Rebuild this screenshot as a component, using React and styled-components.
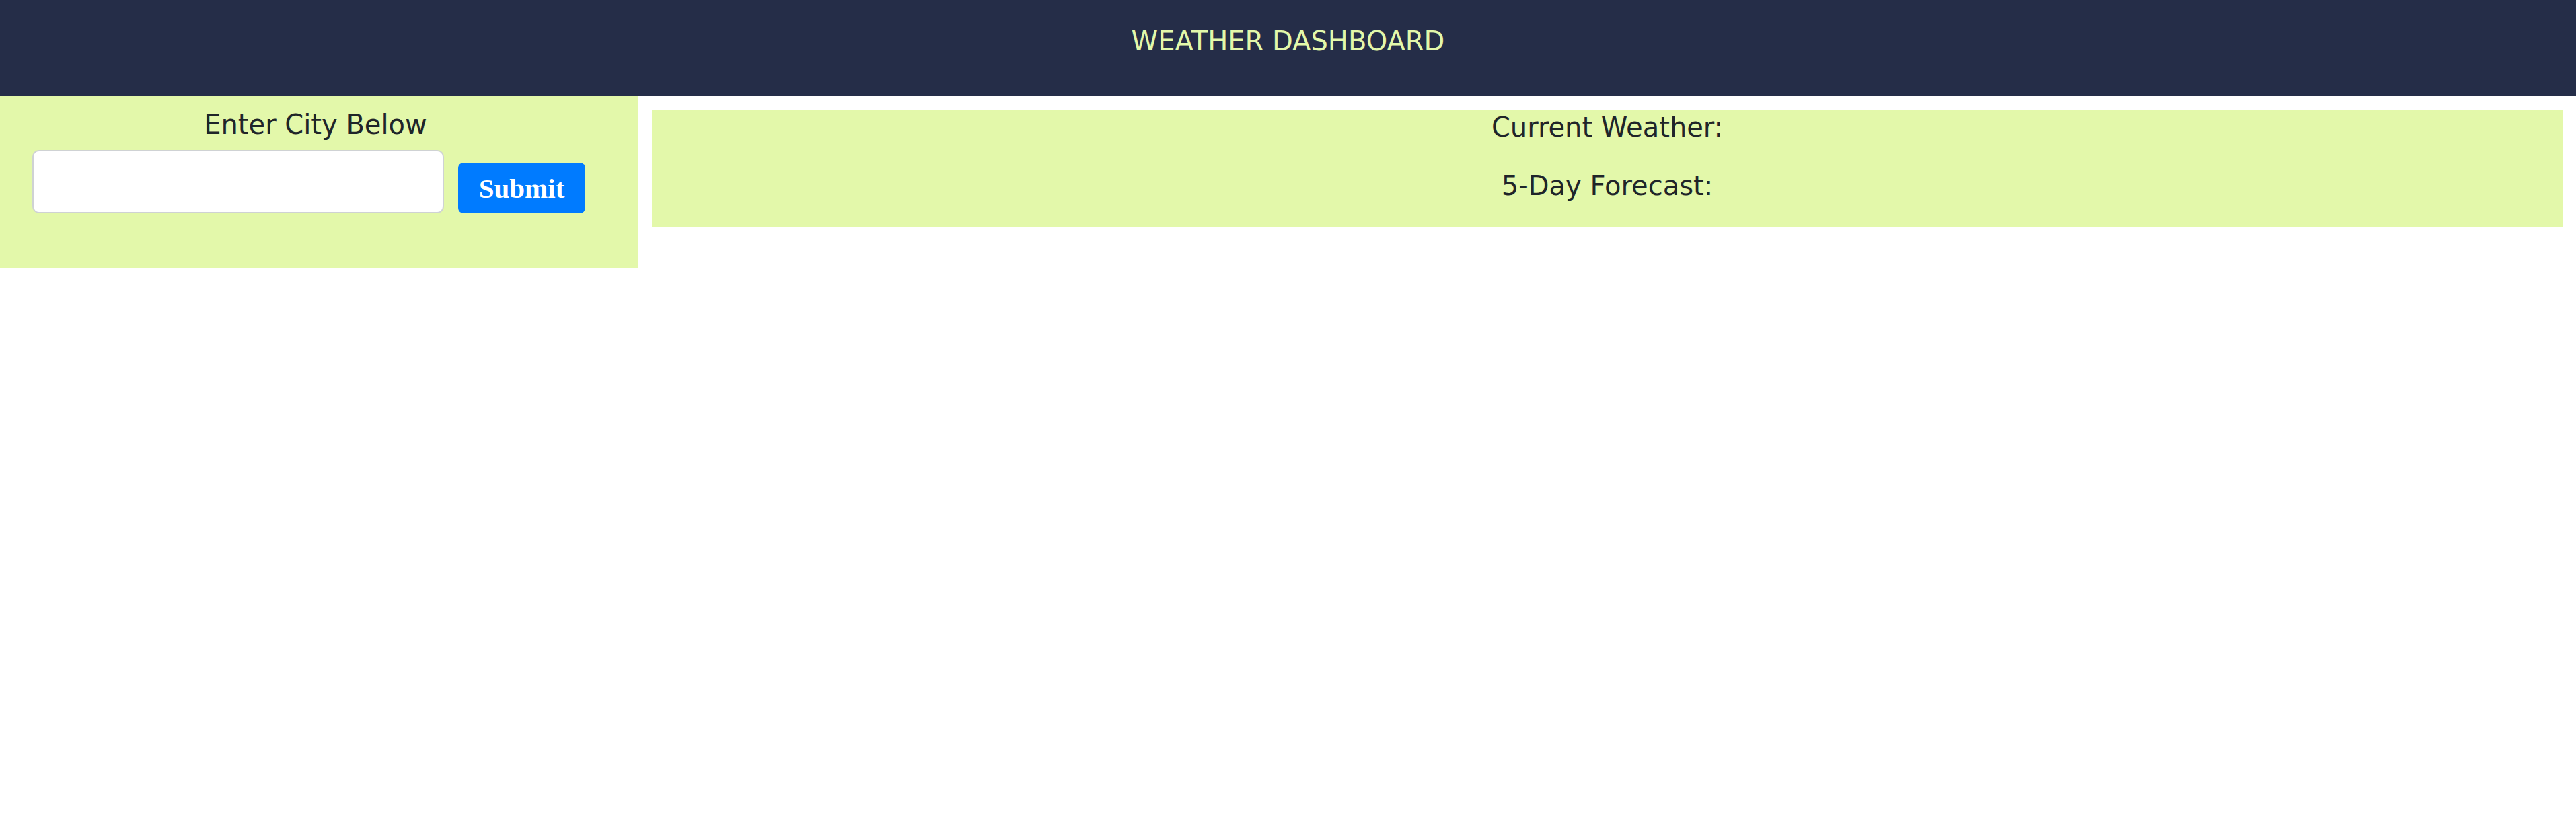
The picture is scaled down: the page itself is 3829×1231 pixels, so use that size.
import React from 'react';
import styled, { createGlobalStyle } from 'styled-components';

const GlobalStyle = createGlobalStyle`
    body {
        margin: 0;
        background-color: #fff;
        font-family: "DejaVu Sans", Verdana, sans-serif;
        color: #1f2529;
    }
`;

const Header = styled.header`
    height: 142px;
    box-sizing: border-box;
    padding-top: 38px;
    background-color: #252d48;
    text-align: center;
`;

const Title = styled.h1`
    margin: 0;
    font-size: 40px;
    line-height: 47px;
    font-weight: 400;
    color: #e3f8aa;
`;

const Main = styled.main`
    display: flex;
    align-items: flex-start;
`;

const Search = styled.aside`
    width: 948px;
    flex-shrink: 0;
    box-sizing: border-box;
    padding: 20px 0 81px 48px;
    background-color: #e3f8aa;
`;

const SearchHeader = styled.h2`
    margin: 0 0 14px;
    padding-right: 58px;
    font-size: 40px;
    line-height: 47px;
    font-weight: 400;
    text-align: center;
`;

const SearchForm = styled.form`
    display: flex;
    align-items: flex-end;
    gap: 21px;
`;

const CityInput = styled.input`
    width: 612px;
    height: 94px;
    box-sizing: border-box;
    border: 2px solid #cfd2d4;
    border-radius: 10px;
    background-color: #fff;
    font-size: 36px;
    padding: 0 16px;
`;

const SubmitButton = styled.button`
    width: 189px;
    height: 75px;
    border: none;
    border-radius: 8px;
    background-color: #007bff;
    color: #fff;
    font-family: "Liberation Serif", "Times New Roman", serif;
    font-weight: 700;
    font-size: 41px;
    padding: 0;
`;

const Results = styled.section`
    flex: 1;
    margin: 21px 20px 0 21px;
    padding: 3px 0 38px;
    display: flex;
    flex-direction: column;
    gap: 40px;
    background-color: #e3f8aa;
`;

const ResultHeader = styled.h3`
    margin: 0;
    font-size: 40px;
    line-height: 47px;
    font-weight: 400;
    text-align: center;
`;

const App = () => {
    return (
        <>
            <GlobalStyle />
            <Header>
                <Title>WEATHER DASHBOARD</Title>
            </Header>
            <Main>
                <Search>
                    <SearchHeader>Enter City Below</SearchHeader>
                    <SearchForm onSubmit={e => e.preventDefault()}>
                        <CityInput type='text' />
                        <SubmitButton type='submit'>Submit</SubmitButton>
                    </SearchForm>
                </Search>
                <Results>
                    <ResultHeader>Current Weather:</ResultHeader>
                    <ResultHeader>5-Day Forecast:</ResultHeader>
                </Results>
            </Main>
        </>
    )
}

export default App;
